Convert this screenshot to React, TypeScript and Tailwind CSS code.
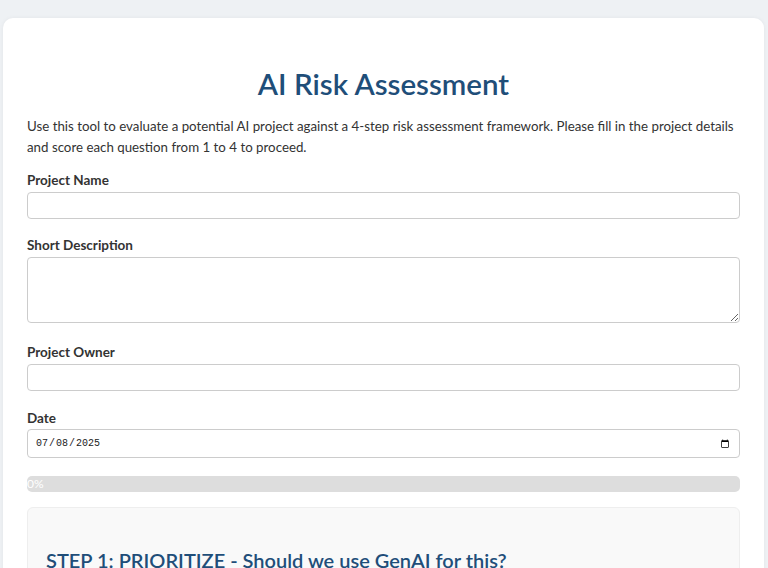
import React from "react";

const font = { fontFamily: 'Lato, "Noto Sans", sans-serif' };

const Label: React.FC<{ htmlFor: string; children: React.ReactNode }> = ({ htmlFor, children }) => (
  <label htmlFor={htmlFor} className="block text-[13.5px] font-bold text-[#333] mb-[2px] leading-[20px]">
    {children}
  </label>
);

const App: React.FC = () => {
  return (
    <div className="min-h-screen bg-[#eef1f4] pt-[18px] pl-[3px] pr-[4px]" style={font}>
      <div className="bg-white rounded-[10px] px-[24px] pt-[46px] pb-[24px] shadow-[0_0_4px_rgba(0,0,0,0.05)]">
        <h1 className="text-center text-[29.5px] leading-[40px] font-semibold text-[#1f4e79]">AI Risk Assessment</h1>
        <p className="mt-[12px] text-[13.3px] leading-[21px] text-[#333]">
          Use this tool to evaluate a potential AI project against a 4-step risk assessment framework. Please fill in the project details and score each question from 1 to 4 to proceed.
        </p>

        <div className="mt-[12px]">
          <Label htmlFor="name">Project Name</Label>
          <input id="name" type="text" className="block w-full h-[27px] border border-[#ccc] rounded-[4px] px-2 text-[13px]" />
        </div>

        <div className="mt-[16px]">
          <Label htmlFor="desc">Short Description</Label>
          <textarea id="desc" className="block w-full h-[66px] border border-[#ccc] rounded-[4px] px-2 text-[13px]" />
        </div>

        <div className="mt-[19px]">
          <Label htmlFor="owner">Project Owner</Label>
          <input id="owner" type="text" className="mt-[1px] block w-full h-[27px] border border-[#ccc] rounded-[4px] px-2 text-[13px]" />
        </div>

        <div className="mt-[17px]">
          <Label htmlFor="date">Date</Label>
          <input
            id="date"
            type="date"
            defaultValue="2025-07-08"
            className="-mt-[1px] block w-full h-[29px] border border-[#ccc] rounded-[4px] px-[7px] text-[10px] text-[#222] font-['Liberation_Mono',monospace]"
          />
        </div>

        <div className="mt-[18px] h-[16px] w-full rounded-[5px] bg-[#ddd] overflow-visible">
          <div className="h-full w-0 text-[12px] leading-[16px] text-white whitespace-nowrap">0%</div>
        </div>

        <div className="mt-[15px] border border-[#eee] bg-[#f9f9f9] rounded-[6px] px-[18px] pt-[38px] pb-[20px]">
          <h2 className="text-[20px] leading-[28px] font-semibold text-[#1f4e79]">STEP 1: PRIORITIZE - Should we use GenAI for this?</h2>
          <div className="h-[200px]" />
        </div>
      </div>
    </div>
  );
};

export default App;
